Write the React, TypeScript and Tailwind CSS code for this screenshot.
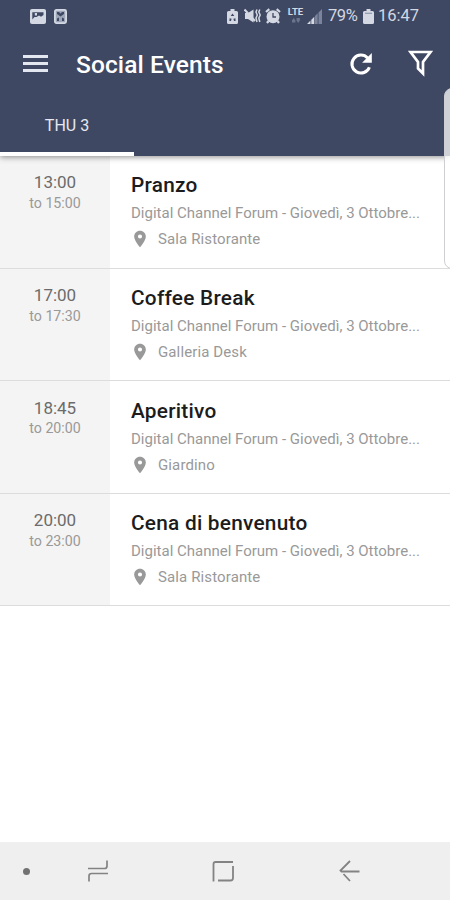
import { MdLocationOn } from "react-icons/md"

const events = [
  {
    start: "13:00",
    end: "to 15:00",
    title: "Pranzo",
    description: "Digital Channel Forum - Giovedì, 3 Ottobre...",
    place: "Sala Ristorante",
  },
  {
    start: "17:00",
    end: "to 17:30",
    title: "Coffee Break",
    description: "Digital Channel Forum - Giovedì, 3 Ottobre...",
    place: "Galleria Desk",
  },
  {
    start: "18:45",
    end: "to 20:00",
    title: "Aperitivo",
    description: "Digital Channel Forum - Giovedì, 3 Ottobre...",
    place: "Giardino",
  },
  {
    start: "20:00",
    end: "to 23:00",
    title: "Cena di benvenuto",
    description: "Digital Channel Forum - Giovedì, 3 Ottobre...",
    place: "Sala Ristorante",
  },
]

function StatusBar() {
  return (
    <div className="flex h-8 items-center pl-[30px] pr-[31px] text-[#d3d8e3]">
      <svg className="h-[15px] w-4" viewBox="0 0 16 15">
        <rect width="16" height="15" rx="2" fill="currentColor" />
        <path d="M2.3 10.5V3.3H13.5V6L11 7.7L9 6.5L6.5 8L4.5 8Z" fill="#3f4862" />
        <path d="M4.8 4H7V6.5H4.8Z" fill="currentColor" />
      </svg>
      <svg className="ml-2 h-[15px] w-[13px]" viewBox="0 0 13 15">
        <rect x="0.9" y="0.9" width="11.2" height="13.2" rx="1.5" fill="#9da6b9" stroke="currentColor" strokeWidth="1.8" />
        <path d="M3 3H5L6.5 4.5L8 3H10V5L6.5 7.5L3 5ZM3 9.5L5 8.5V12H3ZM8 8.5L10 9.5V12H8Z" fill="#3f4862" />
      </svg>
      <svg className="ml-auto h-[15px] w-[11px]" viewBox="0 0 11 15">
        <path d="M3.5 0H7.5V2H9.5Q11 2 11 3.5V13.5Q11 15 9.5 15H1.5Q0 15 0 13.5V3.5Q0 2 1.5 2H3.5Z" fill="currentColor" />
        <path d="M5.5 4.5L7.3 7H3.7ZM2.6 9.2L4.6 9.7L4 12H2.4ZM8.4 9.2L6.4 9.7L7 12H8.6Z" fill="#3f4862" />
      </svg>
      <svg className="ml-1.5 h-4 w-[17px]" viewBox="0 0 17 16">
        <path d="M1 5H4L9.5 1.5V14.5L4 11H1Z" fill="currentColor" />
        <path d="M0.5 1.5L11 13" stroke="currentColor" strokeWidth="2" />
        <path d="M13 1.5L12 4L13.3 7L12 10L13 14M15.8 1.5L14.8 4L16.2 7L14.8 10L15.8 14" fill="none" stroke="currentColor" strokeWidth="1.5" />
      </svg>
      <svg className="ml-1 h-4 w-4" viewBox="0 0 16 16">
        <circle cx="8" cy="8.7" r="6.5" fill="currentColor" />
        <path d="M1 4L4.3 1.2M15 4L11.7 1.2M3.5 13L2 15M12.5 13L14 15" stroke="currentColor" strokeWidth="2.2" />
        <path d="M8 5V9H11" fill="none" stroke="#3f4862" strokeWidth="1.3" />
      </svg>
      <div className="ml-[6px] flex h-4 w-[17px] flex-col items-center">
        <span className="text-[9.5px] font-bold leading-[8px]">LTE</span>
        <svg className="mt-0.5 h-[5px] w-2" viewBox="0 0 8 5">
          <path d="M0 2.5L1.7 0L3.4 2.5V4.5H0ZM4.5 0H7.9V2.5L6.2 5L4.5 2.5Z" fill="#6b758d" />
        </svg>
      </div>
      <svg className="ml-[3px] h-[15px] w-[15px]" viewBox="0 0 15 15">
        <path d="M0 15L3.5 11.5V15ZM4.3 15V10.7L7.3 7.7V15Z" fill="currentColor" />
        <path d="M8 15V7L10.7 4.3V15ZM11.5 15V3.5L15 0V15Z" fill="#7a849c" />
      </svg>
      <span className="ml-1.5 w-[30px] whitespace-nowrap text-[16.5px] tracking-[-0.4px]">79%</span>
      <svg className="ml-[5px] h-[15px] w-[11px]" viewBox="0 0 11 15">
        <path d="M3.5 0H7.5V2H9.5Q11 2 11 3.5V13.5Q11 15 9.5 15H1.5Q0 15 0 13.5V3.5Q0 2 1.5 2H3.5Z" fill="currentColor" />
        <path d="M2 4.3H9" stroke="#8f98ad" strokeWidth="1.2" />
      </svg>
      <span className="ml-1 w-[41px] whitespace-nowrap text-[16.5px]">16:47</span>
    </div>
  )
}

function Toolbar() {
  return (
    <div className="flex h-16 items-center pl-[23px] pr-4 text-white">
      <div className="flex w-[25px] flex-col gap-1 pb-0.5">
        <span className="h-[3px] bg-[#e3e7f0]"></span>
        <span className="h-[3px] bg-[#e3e7f0]"></span>
        <span className="h-[3px] bg-[#e3e7f0]"></span>
      </div>
      <h1 className="ml-7 whitespace-nowrap pt-px text-[24.5px] font-medium leading-8 tracking-[0.1px]">
        Social Events
      </h1>
      <svg className="ml-auto size-8" viewBox="0 0 32 32">
        <path d="M24.4 19.2A9 9 0 1 1 22.6 10" fill="none" stroke="currentColor" strokeWidth="3" />
        <path d="M26.8 5V14.7H17.1Z" fill="currentColor" />
      </svg>
      <svg className="mb-px ml-[31px] mr-px h-[27px] w-[25px]" viewBox="0 0 25 27">
        <path d="M2.5 2H22.5L15 12V23.5L10 18.5V12Z" fill="none" stroke="currentColor" strokeWidth="2.7" />
      </svg>
    </div>
  )
}

function NavBar() {
  return (
    <nav className="mt-auto flex h-[58px] items-center bg-[#efefef] text-[#838383]">
      <span className="ml-[23px] size-[7px] rounded-full bg-[#727272]"></span>
      <svg className="ml-[57px] h-[22px] w-[22px]" viewBox="0 0 22 22" fill="none" stroke="currentColor" strokeWidth="1.7">
        <path d="M1 8.5H17.5Q20 8.5 20 6V0.5M21 13.5H4.5Q2 13.5 2 16V21.5" />
      </svg>
      <svg className="ml-[103px] h-[22px] w-[22px]" viewBox="0 0 22 22" fill="none" stroke="currentColor" strokeWidth="1.8">
        <path d="M1.5 21.5V4Q1.5 2 3.5 2H21M21 6V18Q21 20.5 18.5 20.5H6" />
      </svg>
      <svg className="ml-[105px] h-[22px] w-[21px]" viewBox="0 0 21 22" fill="none" stroke="currentColor" strokeWidth="1.8">
        <path d="M11 1L1.5 10.5L2.5 11.5H20.5M4.5 14L11 21" />
      </svg>
    </nav>
  )
}

export default function App() {
  return (
    <main className="relative flex h-[900px] w-[450px] flex-col overflow-hidden bg-white font-[Roboto,sans-serif]">
      <header className="relative z-10 flex h-[156px] shrink-0 flex-col bg-[#3f4862] shadow-[0_1px_6px_rgba(0,0,0,0.45)]">
        <StatusBar />
        <Toolbar />
        <div className="flex flex-1">
          <div className="flex w-[134px] items-center justify-center border-b-4 border-white pt-1 text-base text-[#e6e9f1]">
            THU 3
          </div>
        </div>
      </header>

      <section>
        {events.map((event) => (
          <article key={event.start} className="flex h-[112.6px] border-b-[1.5px] border-[#dcdcdc]">
            <div className="w-[110px] bg-[#f4f4f4] pt-[15.4px] text-center">
              <p className="text-[17px] leading-[22px] text-[#6b6b6b]">{event.start}</p>
              <p className="pt-[0.6px] text-[14.2px] leading-[19px] text-[#999]">{event.end}</p>
            </div>
            <div className="pl-[21px] pt-[16.4px]">
              <h2 className="text-[20.8px] font-medium leading-[26px] tracking-[0.25px] text-[#1c1c1c]">{event.title}</h2>
              <p className="mt-[5px] whitespace-nowrap text-[15px] leading-5 text-[#999]">{event.description}</p>
              <div className="mt-1.5 flex items-center">
                <MdLocationOn className="-ml-px size-5 text-[#999]" />
                <span className="ml-2 text-[15px] leading-5 tracking-[0.12px] text-[#999]">{event.place}</span>
              </div>
            </div>
          </article>
        ))}
      </section>

      {/* edge panel handle, slides over the content */}
      <div className="absolute left-[444px] top-[88px] z-20 h-[181px] w-4 rounded-lg border border-[#cfcfd3] bg-white/75"></div>

      <NavBar />
    </main>
  )
}
